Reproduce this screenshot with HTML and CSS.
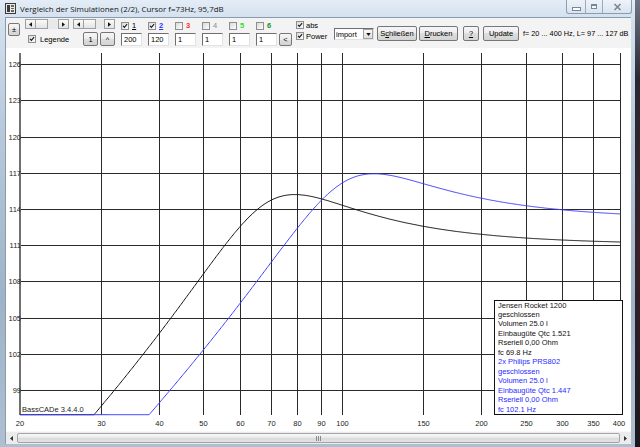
FILE: index.html
```html
<!DOCTYPE html>
<html lang="de">
<head>
<meta charset="utf-8">
<title>BassCADe</title>
<link rel="stylesheet" href="styles.css">
</head>
<body>
<div class="screen">
  <div class="window">
    <div class="titlebar">
      <svg class="appicon" viewBox="0 0 11 11">
        <rect x="0.5" y="0.5" width="10" height="10" fill="#e9e9e9" stroke="#3a3a3a"/>
        <rect x="2" y="2" width="3" height="7" fill="#3c3c3c"/>
        <rect x="6" y="2" width="3" height="2" fill="#666"/>
        <rect x="6" y="5" width="3" height="1" fill="#666"/>
        <rect x="6" y="7" width="3" height="2" fill="#666"/>
      </svg>
      <span class="title">Vergleich der Simulationen (2/2), Cursor f=73Hz, 95,7dB</span>
      <div class="caption">
        <span class="cap min"><i class="bar"></i></span>
        <span class="cap max"><i class="box"></i></span>
        <span class="cap close">
          <svg viewBox="0 0 9 8" class="xglyph"><path d="M1.5 1 L7.5 7 M7.5 1 L1.5 7" stroke="#7c8590" stroke-width="1.6" fill="none"/></svg>
        </span>
      </div>
    </div>
    <div class="frame">
      <div class="client">
        <div class="toolbar">
          <button class="btn pm">±</button>
          <div class="nav">
            <div class="nav-row">
              <div class="sb w44">
                <span class="sb-arr"><svg viewBox="0 0 4 6" class="tri"><path d="M4 0 L0 3 L4 6 Z"/></svg></span>
                <span class="sb-thumb"></span>
                <span class="sb-track"></span>
                <span class="sb-arr"><svg viewBox="0 0 4 6" class="tri"><path d="M0 0 L4 3 L0 6 Z"/></svg></span>
              </div>
              <div class="sb w42">
                <span class="sb-arr"><svg viewBox="0 0 4 6" class="tri"><path d="M4 0 L0 3 L4 6 Z"/></svg></span>
                <span class="sb-thumb"></span>
                <span class="sb-track"></span>
                <span class="sb-arr"><svg viewBox="0 0 4 6" class="tri"><path d="M0 0 L4 3 L0 6 Z"/></svg></span>
              </div>
            </div>
            <div class="nav-row2">
              <label class="cbx legende"><span class="chk"><svg viewBox="0 0 8 8"><path d="M1.3 3.8 L3.2 5.8 L6.8 1.6" stroke="#1c1c1c" stroke-width="1.5" fill="none"/></svg></span>Legende</label>
              <button class="btn sq push">1</button>
              <button class="btn sq">^</button>
            </div>
          </div>
          <div class="series">
            <div class="series-row">
              <label class="ser"><span class="chk"><svg viewBox="0 0 8 8"><path d="M1.3 3.8 L3.2 5.8 L6.8 1.6" stroke="#1c1c1c" stroke-width="1.5" fill="none"/></svg></span><u class="s1">1</u></label>
              <label class="ser"><span class="chk"><svg viewBox="0 0 8 8"><path d="M1.3 3.8 L3.2 5.8 L6.8 1.6" stroke="#1c1c1c" stroke-width="1.5" fill="none"/></svg></span><u class="s2">2</u></label>
              <label class="ser"><span class="chk"></span><b class="s3">3</b></label>
              <label class="ser"><span class="chk"></span><span class="s4">4</span></label>
              <label class="ser"><span class="chk"></span><b class="s5">5</b></label>
              <label class="ser"><span class="chk"></span><b class="s6">6</b></label>
            </div>
            <div class="series-row2">
              <span class="edit">200</span>
              <span class="edit">120</span>
              <span class="edit">1</span>
              <span class="edit">1</span>
              <span class="edit">1</span>
              <span class="edit">1</span>
              <button class="btn lt">&lt;</button>
            </div>
          </div>
          <div class="absp">
            <label class="cbx"><span class="chk"><svg viewBox="0 0 8 8"><path d="M1.3 3.8 L3.2 5.8 L6.8 1.6" stroke="#1c1c1c" stroke-width="1.5" fill="none"/></svg></span>abs</label>
            <label class="cbx power"><span class="chk"><svg viewBox="0 0 8 8"><path d="M1.3 3.8 L3.2 5.8 L6.8 1.6" stroke="#1c1c1c" stroke-width="1.5" fill="none"/></svg></span>Power</label>
          </div>
          <div class="select"><span class="sel-text">import</span><span class="dd"><svg viewBox="0 0 6 4" class="ddtri"><path d="M0 0 L6 0 L3 4 Z"/></svg></span></div>
          <button class="btn act w-sch">S<u>c</u>hließen</button>
          <button class="btn act w-dr"><u>D</u>rucken</button>
          <button class="btn act w-q"><u>?</u></button>
          <button class="btn act w-up">Update</button>
          <span class="info">f= 20 ... 400 Hz, L= 97 ... 127 dB</span>
        </div>

        <svg class="chart" width="625" height="383" viewBox="6 48 625 383">
          <g class="grid">
            <line x1="20" y1="64.5" x2="620.5" y2="64.5"/>
            <line x1="20" y1="100.5" x2="620.5" y2="100.5"/>
            <line x1="20" y1="137.5" x2="620.5" y2="137.5"/>
            <line x1="20" y1="173.5" x2="620.5" y2="173.5"/>
            <line x1="20" y1="209.5" x2="620.5" y2="209.5"/>
            <line x1="20" y1="245.5" x2="620.5" y2="245.5"/>
            <line x1="20" y1="281.5" x2="620.5" y2="281.5"/>
            <line x1="20" y1="318.5" x2="620.5" y2="318.5"/>
            <line x1="20" y1="354.5" x2="620.5" y2="354.5"/>
            <line x1="20" y1="390.5" x2="620.5" y2="390.5"/>
            <line x1="101.5" y1="52.5" x2="101.5" y2="414.5"/>
            <line x1="159.5" y1="52.5" x2="159.5" y2="414.5"/>
            <line x1="203.5" y1="52.5" x2="203.5" y2="414.5"/>
            <line x1="240.5" y1="52.5" x2="240.5" y2="414.5"/>
            <line x1="271.5" y1="52.5" x2="271.5" y2="414.5"/>
            <line x1="297.5" y1="52.5" x2="297.5" y2="414.5"/>
            <line x1="321.5" y1="52.5" x2="321.5" y2="414.5"/>
            <line x1="342.5" y1="52.5" x2="342.5" y2="414.5"/>
            <line x1="423.5" y1="52.5" x2="423.5" y2="414.5"/>
            <line x1="481.5" y1="52.5" x2="481.5" y2="414.5"/>
            <line x1="526.5" y1="52.5" x2="526.5" y2="414.5"/>
            <line x1="562.5" y1="52.5" x2="562.5" y2="414.5"/>
            <line x1="593.5" y1="52.5" x2="593.5" y2="414.5"/>
            <line x1="620.5" y1="52.5" x2="620.5" y2="414.5"/>
          </g>
          <line class="yaxis" x1="20" y1="52.5" x2="20" y2="414.5"/>
          <g class="ylab">
            <text x="21" y="67.3">126</text>
            <text x="21" y="103.3">123</text>
            <text x="21" y="140.3">120</text>
            <text x="21" y="176.3">117</text>
            <text x="21" y="212.3">114</text>
            <text x="21" y="248.3">111</text>
            <text x="21" y="284.3">108</text>
            <text x="21" y="321.3">105</text>
            <text x="21" y="357.3">102</text>
            <text x="21" y="393.3">99</text>
          </g>
          <g class="xlab">
            <text x="20" y="425.5">20</text>
            <text x="101.5" y="425.5">30</text>
            <text x="159.5" y="425.5">40</text>
            <text x="203.5" y="425.5">50</text>
            <text x="240.5" y="425.5">60</text>
            <text x="271.5" y="425.5">70</text>
            <text x="297.5" y="425.5">80</text>
            <text x="321.5" y="425.5">90</text>
            <text x="342.5" y="425.5">100</text>
            <text x="423.5" y="425.5">150</text>
            <text x="481.5" y="425.5">200</text>
            <text x="526.5" y="425.5">250</text>
            <text x="562.5" y="425.5">300</text>
            <text x="593.5" y="425.5">350</text>
            <text x="619" y="425.5">400</text>
          </g>
          <polyline id="curve1" class="curve c1" points=""/>
          <polyline id="curve2" class="curve c2" points=""/>
          <text class="ver" x="22" y="412">BassCADe 3.4.4.0</text>
          <rect class="legend-box" x="494.5" y="300.5" width="128" height="113.5"/>
          <g class="legend">
            <text x="498" y="307.5">Jensen Rocket 1200</text>
            <text x="498" y="317">geschlossen</text>
            <text x="498" y="326.4">Volumen 25.0 l</text>
            <text x="498" y="335.9">Einbaugüte Qtc 1.521</text>
            <text x="498" y="345.3">Rseriell 0,00 Ohm</text>
            <text x="498" y="354.8">fc 69.8 Hz</text>
            <text class="lb" x="498" y="364.2">2x Philips PRS802</text>
            <text class="lb" x="498" y="373.7">geschlossen</text>
            <text class="lb" x="498" y="383.1">Volumen 25.0 l</text>
            <text class="lb" x="498" y="392.6">Einbaugüte Qtc 1.447</text>
            <text class="lb" x="498" y="402">Rseriell 0,00 Ohm</text>
            <text class="lb" x="498" y="411.5">fc 102.1 Hz</text>
          </g>
        </svg>

        <div class="hscroll">
          <span class="hs-arr"><svg viewBox="0 0 3 5" class="htri"><path d="M3 0 L0 2.5 L3 5 Z"/></svg></span>
          <span class="hs-thumb"><span class="grip"><i></i><i></i><i></i></span></span>
          <span class="hs-arr"><svg viewBox="0 0 3 5" class="htri"><path d="M0 0 L3 2.5 L0 5 Z"/></svg></span>
        </div>
      </div>
    </div>
  </div>
  <div class="desktop"></div>
</div>
<script src="script.js"></script>
</body>
</html>
```

FILE: styles.css
```css
* { box-sizing: border-box; margin: 0; padding: 0; }
html, body { width: 640px; height: 447px; overflow: hidden; }
body {
  background: #1c1a20;
  font-family: "Liberation Sans", Arial, sans-serif;
  font-size: 7.5px;
  color: #000;
}
.screen { display: flex; width: 640px; height: 447px; }
.window {
  width: 635px;
  height: 447px;
  display: flex;
  flex-direction: column;
  background: linear-gradient(#e4edf7, #d4e1ef 17px, #b9cadc 120px, #9fb3c8 300px, #aebfd1);
}
.desktop {
  flex: 1;
  background: linear-gradient(#6d7484, #2a2630 80px, #3a2228 250px, #1a181e);
}

/* title bar */
.titlebar { height: 17px; display: flex; align-items: center; padding-left: 5px; }
.appicon { width: 11px; height: 11px; flex: none; }
.title {
  margin-left: 4px;
  font-family: "Open Sans", "Liberation Sans", sans-serif;
  font-size: 7.9px;
  color: #141414;
  white-space: nowrap;
}
.caption {
  margin-left: auto;
  margin-right: 3px;
  align-self: flex-start;
  display: flex;
  height: 14px;
  border: 1px solid #8b9cb0;
  border-top: 0;
  border-radius: 0 0 3px 3px;
  background: linear-gradient(#eef3f9, #d9e4f0);
}
.cap { display: flex; align-items: center; justify-content: center; height: 13px; }
.cap + .cap { border-left: 1px solid #9aabbd; }
.min { width: 18px; }
.max { width: 17px; }
.close { width: 29px; }
.bar { display: block; width: 7px; height: 2px; margin-top: 4px; background: #fff; border: 1px solid #7a8595; box-sizing: content-box; }
.box { display: block; width: 6px; height: 5px; border: 1px solid #7a8595; border-top-width: 2px; background: #f4f7fb; }
.xglyph { width: 9px; height: 8px; }

/* frame + client */
.frame { flex: 1; display: flex; padding: 0 4px 3px 5px; min-height: 0; }
.client {
  flex: 1;
  display: flex;
  flex-direction: column;
  background: #fff;
  border-top: 1px solid #8a9bae;
  border-left: 1px solid #8a9bae;
  min-width: 0;
}

/* toolbar */
.toolbar {
  height: 30px;
  flex: none;
  display: flex;
  align-items: flex-start;
  background: #f3f3f3;
  white-space: nowrap;
}
.btn {
  font-family: "Liberation Sans", Arial, sans-serif;
  font-size: 7.5px;
  color: #000;
  border: 1px solid #767676;
  border-radius: 2px;
  background: linear-gradient(#f6f6f6, #ececec 50%, #dedede 50%, #d3d3d3);
  display: flex;
  align-items: center;
  justify-content: center;
  flex: none;
}
.pm { width: 12px; height: 13px; margin: 5px 0 0 2px; }
.nav { margin: 1px 0 0 5px; width: 90px; display: flex; flex-direction: column; }
.nav-row { display: flex; gap: 4px; height: 10px; }
.sb { display: flex; height: 10px; background: #e9e9e9; }
.w44 { width: 44px; }
.w42 { width: 42px; }
.sb-arr {
  width: 11px;
  border: 1px solid #a0a0a0;
  background: linear-gradient(#fbfbfb, #e3e3e3);
  display: flex;
  align-items: center;
  justify-content: center;
}
.sb-thumb {
  width: 12px;
  border: 1px solid #a0a0a0;
  border-left: 0;
  background: linear-gradient(#fbfbfb, #e3e3e3);
}
.sb-track { flex: 1; }
.tri { width: 3px; height: 5px; fill: #111; }
.nav-row2 { display: flex; align-items: center; height: 14px; margin-top: 3px; }
.cbx { display: flex; align-items: center; gap: 3px; }
.legende { margin-left: 3px; gap: 4px; }
.chk {
  width: 8px;
  height: 8px;
  flex: none;
  border: 1px solid #8e8f8f;
  background: linear-gradient(135deg, #dadada, #fdfdfd);
  display: flex;
}
.chk svg { width: 6px; height: 6px; }
.sq { width: 15px; height: 14px; margin-left: 2px; }
.push { margin-left: auto; }

.series { margin-left: 6px; display: flex; flex-direction: column; }
.series-row { display: flex; margin-top: 4px; height: 8px; }
.ser { width: 27px; display: flex; align-items: center; gap: 3px; }
.ser u, .ser b, .ser span.s4 { font-size: 7.5px; line-height: 8px; }
.s1 { color: #000; }
.s2 { color: #3030ff; font-weight: bold; }
.s3 { color: #ff2a2a; }
.s4 { color: #8a8a8a; }
.s5 { color: #30dd30; }
.s6 { color: #1a8f1a; }
.series-row2 { display: flex; gap: 6px; margin-top: 3px; }
.edit {
  width: 21px;
  height: 13px;
  background: #fff;
  border: 1px solid;
  border-color: #6f6f6f #e2e2e2 #e2e2e2 #6f6f6f;
  padding-left: 2px;
  line-height: 11px;
}
.lt { width: 13px; height: 13px; margin-left: -4px; }

.absp { margin-left: 4px; width: 32px; display: flex; flex-direction: column; }
.absp .cbx { height: 8px; margin-top: 3px; gap: 2px; }

.select {
  margin: 10px 0 0 6px;
  width: 40px;
  height: 12px;
  display: flex;
  align-items: center;
  background: #fff;
  border: 1px solid;
  border-color: #6f6f6f #e2e2e2 #e2e2e2 #6f6f6f;
}
.sel-text { flex: 1; padding-left: 1px; }
.dd {
  width: 10px;
  height: 10px;
  border: 1px solid #a0a0a0;
  background: linear-gradient(#fbfbfb, #dedede);
  display: flex;
  align-items: center;
  justify-content: center;
}
.ddtri { width: 5px; height: 3px; fill: #111; }

.act { height: 15px; margin-top: 8px; }
.w-sch { width: 40px; margin-left: 3px; }
.w-dr { width: 39px; margin-left: 2px; }
.w-q { width: 16px; margin-left: 5px; }
.w-up { width: 36px; margin-left: 4px; }
.info { margin-left: 4px; align-self: center; font-size: 7.3px; }

/* chart */
.chart { display: block; flex: none; background: #fff; }
.grid line { stroke: #2a2a2a; stroke-width: 1; shape-rendering: crispEdges; }
.yaxis { stroke: #707070; stroke-width: 2; shape-rendering: crispEdges; }
.chart text {
  font-family: "Liberation Sans", Arial, sans-serif;
  font-size: 7.5px;
  fill: #222;
}
.ylab text { text-anchor: end; }
.xlab text { text-anchor: middle; }
.curve { fill: none; stroke-width: 1; stroke-linejoin: round; }
.c1 { stroke: #111; }
.c2 { stroke: #3c3cff; }
.legend-box { fill: #fff; stroke: #111; stroke-width: 1; shape-rendering: crispEdges; }
.legend text { fill: #111; }
.legend text.lb { fill: #2a2aff; }

/* bottom scrollbar */
.hscroll {
  height: 13px;
  flex: none;
  display: flex;
  background: #ececec;
  border-top: 1px solid #f8f8f8;
  padding: 1px 0;
}
.hs-arr { width: 11px; display: flex; align-items: center; justify-content: center; }
.htri { width: 3px; height: 5px; fill: #333; }
.hs-thumb {
  flex: 1;
  border: 1px solid #a4a4a4;
  border-radius: 2px;
  background: linear-gradient(#fafafa, #e8e8e8 50%, #dadada 50%, #e2e2e2);
  display: flex;
  align-items: center;
  justify-content: center;
}
.grip { display: flex; gap: 1px; }
.grip i { display: block; width: 1px; height: 5px; background: #8a8a8a; }
```

FILE: script.js
```js
(function () {
  var X0 = 20, K = 200.4, YB = 414.7, S = 12.07;
  function xf(f) { return X0 + Math.log(f / 20) * K; }
  function yd(d) { return YB - (Math.max(d, 97) - 97) * S; }
  function hp(f, fc, q, l0) {
    var x = f / fc, x2 = x * x;
    var h = x2 / Math.sqrt((1 - x2) * (1 - x2) + (x / q) * (x / q));
    return l0 + 20 * Math.log(h) / Math.LN10;
  }
  function pts(fc, q, l0) {
    var a = [];
    for (var i = 0; i <= 600; i++) {
      var f = 20 * Math.exp(i / 600 * Math.log(20));
      a.push(xf(f).toFixed(1) + ',' + yd(hp(f, fc, q, l0)).toFixed(1));
    }
    return a.join(' ');
  }
  document.getElementById('curve1').setAttribute('points', pts(69.8, 1.521, 111.1));
  document.getElementById('curve2').setAttribute('points', pts(102.1, 1.447, 113.2));
})();
```
